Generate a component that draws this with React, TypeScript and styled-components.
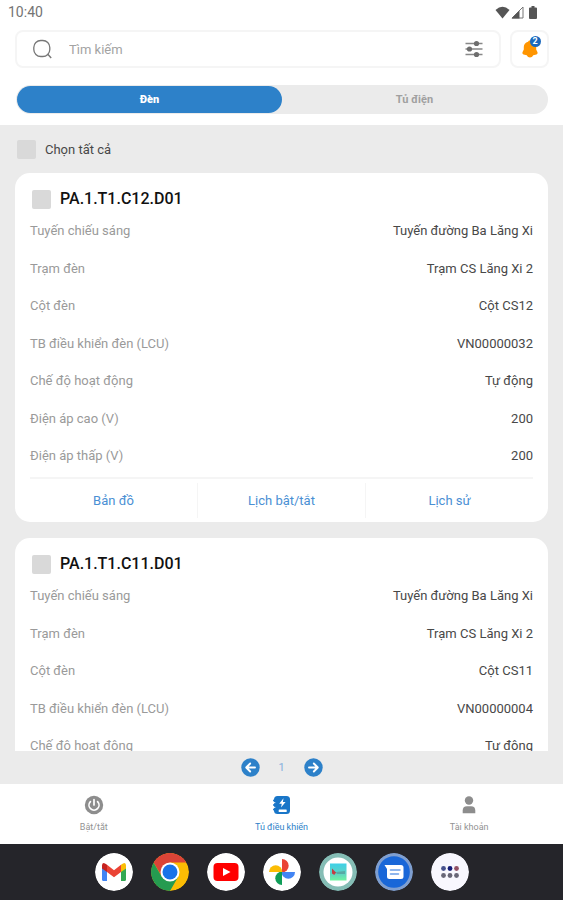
import React from "react";
import styled, { createGlobalStyle } from "styled-components";

const color = {
  blue: "#2d81c9",
  link: "#4a8fd4",
  page: "#ebebeb",
  line: "#f5f5f5",
  muted: "#9a9a9a",
  text: "#484848",
  dock: "#25252a",
};

const GlobalStyle = createGlobalStyle`
  * { box-sizing: border-box; }
  body { margin: 0; font-family: Roboto, "Noto Sans", sans-serif; background: ${color.page}; }
  button, input { font: inherit; }
  button { border: 0; padding: 0; background: none; cursor: pointer; }
`;

const Screen = styled.div`
  display: flex;
  flex-direction: column;
  height: 100vh;
  color: ${color.text};
`;

const Header = styled.header`
  flex: none;
  background: #fff;
  padding-bottom: 11px;
`;

const StatusBar = styled.div`
  display: flex;
  align-items: center;
  justify-content: space-between;
  height: 24px;
  padding: 0 24px 0 8px;
  font-size: 14px;
  color: #747474;
`;

const StatusIcons = styled.div`
  display: flex;
  align-items: center;
  gap: 1px;
`;

const SearchRow = styled.div`
  display: flex;
  gap: 9px;
  padding: 6px 14px 17px 15px;
`;

const SearchBox = styled.label`
  flex: 1;
  min-width: 0;
  display: flex;
  align-items: center;
  height: 38px;
  padding: 0 16px;
  border: 2px solid ${color.line};
  border-radius: 8px;
`;

const SearchInput = styled.input`
  flex: 1;
  min-width: 0;
  margin-left: 17px;
  padding: 0;
  border: 0;
  outline: 0;
  background: none;
  font-size: 13px;
  color: ${color.text};
  &::placeholder { color: #a3a3a3; opacity: 1; }
`;

const IconButton = styled.button`
  display: flex;
`;

const BellButton = styled.button`
  display: grid;
  place-items: center;
  width: 39px;
  height: 38px;
  border: 2px solid ${color.line};
  border-radius: 8px;
`;

const BellWrap = styled.span`
  position: relative;
  display: flex;
`;

const Badge = styled.span`
  position: absolute;
  top: -4px;
  right: -3px;
  width: 11px;
  height: 11px;
  border-radius: 50%;
  background: #1c69bd;
  color: #fff;
  font-size: 9px;
  font-weight: 700;
  line-height: 11px;
  text-align: center;
`;

const Tabs = styled.div`
  display: flex;
  height: 29px;
  margin: 0 15px 0 16px;
  padding: 1px;
  border-radius: 15px;
  background: ${color.page};
`;

const Tab = styled.button<{ $active?: boolean }>`
  flex: 1;
  border-radius: 14px;
  font-size: 11px;
  font-weight: ${(p) => (p.$active ? 900 : 700)};
  background: ${(p) => (p.$active ? color.blue : "transparent")};
  color: ${(p) => (p.$active ? "#fff" : "#a0a0a0")};
`;

const Main = styled.main`
  flex: 1;
  min-height: 0;
  display: flex;
  flex-direction: column;
  padding: 0 15px;
`;

const CheckLabel = styled.label`
  display: flex;
  align-items: center;
  gap: 9px;
`;

const SelectAll = styled(CheckLabel)`
  flex: none;
  height: 48px;
  padding-left: 2px;
  font-size: 13px;
`;

const Checkbox = styled.input`
  appearance: none;
  width: 19px;
  height: 19px;
  margin: 0;
  border-radius: 2px;
  background: #d9d9d9;
  &:checked { background: ${color.blue}; }
`;

const CardList = styled.div`
  flex: 1;
  min-height: 0;
  overflow: hidden;
  display: flex;
  flex-direction: column;
  gap: 16px;
`;

const Card = styled.article`
  flex: none;
  padding: 16px 15px 0;
  border-radius: 15px;
  background: #fff;
`;

const CardTitle = styled.h2`
  margin: 0 0 13px 2px;
  font-size: 16px;
  line-height: 20px;
  font-weight: 500;
  color: #111;
`;

const Fields = styled.dl`
  display: flex;
  flex-direction: column;
  justify-content: space-between;
  height: 243px;
  margin: 0 0 12px;
  font-size: 13px;
  line-height: 18px;
`;

const Field = styled.div`
  display: flex;
  justify-content: space-between;
`;

const FieldName = styled.dt`
  color: ${color.muted};
`;

const FieldValue = styled.dd`
  margin: 0;
`;

const Actions = styled.div`
  display: flex;
  height: 45px;
  border-top: 2px solid ${color.line};
`;

const Action = styled.button`
  flex: 1;
  margin: 4px 0;
  font-size: 13px;
  color: ${color.link};
  & + & { border-left: 1px solid ${color.line}; }
`;

const Pager = styled.nav`
  flex: none;
  display: flex;
  align-items: center;
  justify-content: center;
  gap: 17px;
  height: 33px;
  font-size: 11px;
  color: #86aede;
`;

const PageNumber = styled.span`
  width: 10px;
  text-align: center;
`;

const BottomNav = styled.nav`
  flex: none;
  display: flex;
  height: 60px;
  background: #fff;
`;

const NavItem = styled.a<{ $active?: boolean }>`
  flex: 1;
  display: flex;
  flex-direction: column;
  align-items: center;
  gap: 6px;
  padding-top: 11px;
  font-size: 9px;
  line-height: 12px;
  text-decoration: none;
  color: ${(p) => (p.$active ? color.blue : "#929292")};
`;

const Dock = styled.footer`
  flex: none;
  display: flex;
  align-items: center;
  justify-content: center;
  gap: 18px;
  height: 56px;
  background: ${color.dock};
`;

const DockApp = styled.button`
  display: flex;
  width: 38px;
  height: 38px;
  border-radius: 50%;
  overflow: hidden;
`;

const WifiIcon = () => (
  <svg width="15" height="13" viewBox="0 0 15 13" aria-hidden="true">
    <path d="M0.5 4 Q7.5 -2.5 14.5 4 L7.5 12.5Z" fill="#555" />
  </svg>
);

const SignalIcon = () => (
  <svg width="13" height="13" viewBox="0 0 13 13" aria-hidden="true">
    <path d="M1 12 12 1v11Z" fill="#fff" stroke="#777" />
    <path d="M0.5 12.5 8.5 4.5v8Z" fill="#555" />
  </svg>
);

const BatteryIcon = () => (
  <svg width="14" height="13" viewBox="0 0 14 13" aria-hidden="true">
    <path d="M5 1.5h1.5V0h3v1.5H11q1 0 1 1V12q0 1-1 1H5q-1 0-1-1V2.5q0-1 1-1Z" fill="#555" />
  </svg>
);

const SearchIcon = () => (
  <svg width="19" height="20" viewBox="0 0 19 20" fill="none" stroke="#777" aria-hidden="true">
    <rect x="0.8" y="1.5" width="16" height="16" rx="7" strokeWidth="1.3" />
    <path d="m14.6 15 3.6 4" strokeWidth="1.4" />
  </svg>
);

const FilterIcon = () => (
  <svg width="18" height="18" viewBox="0 0 18 18" aria-hidden="true">
    <path d="M0.5 3.5h17M0.5 9h17M0.5 14.5h17" stroke="#888" strokeWidth="1.5" />
    <g fill="#6e6e6e">
      <circle cx="11.5" cy="3.5" r="2.6" />
      <circle cx="4.5" cy="9" r="2.6" />
      <circle cx="11.5" cy="14.5" r="2.6" />
    </g>
  </svg>
);

const BellIcon = () => (
  <svg width="16" height="18" viewBox="0 0 16 18" aria-hidden="true">
    <path d="M8 .5c-1 0-1.600.5-1.900 1.200C3.300 2.400 1.800 4.300 1.800 7v2.400L.6 12c-.5 1.100-.1 2 .9 2.400l3.300.9C5.600 16.900 6.600 17.500 8 17.500s2.400-.6 3.200-2.200l3.300-.9c1-.4 1.400-1.300.9-2.400l-1.200-2.600V7c0-2.700-1.500-4.600-4.300-5.300C9.600 1 9 .5 8 .5Z" fill="#ff9500" />
  </svg>
);

const ArrowIcon = ({ forward }: { forward?: boolean }) => (
  <svg width="19" height="19" viewBox="0 0 19 19" aria-hidden="true">
    <circle cx="9.5" cy="9.5" r="9.2" fill={color.blue} />
    <path
      d={forward ? "M5 9.5h8.5M9.8 5.5l4 4-4 4" : "M14 9.5H5.5M9.2 5.5l-4 4 4 4"}
      fill="none"
      stroke="#fff"
      strokeWidth="1.9"
      strokeLinecap="round"
      strokeLinejoin="round"
    />
  </svg>
);

const PowerIcon = () => (
  <svg width="20" height="20" viewBox="0 0 20 20" aria-hidden="true">
    <circle cx="10" cy="10" r="9.2" fill="#8d8d8d" />
    <path d="M6.4 6.6a5 5 0 1 0 7.2 0M10 4.500V10" fill="none" stroke="#fff" strokeWidth="1.7" strokeLinecap="round" />
  </svg>
);

const CabinetIcon = () => (
  <svg width="20" height="20" viewBox="0 0 20 20" aria-hidden="true">
    <path d="M5.5 1h9Q18 1 18 4.5v11q0 3.500-3.500 3.500h-9Q2 19 2 15.500v-11Q2 1 5.500 1Z" fill="#1976c8" />
    <path d="M2 5.500h2M2 10h2M2 14.500h2" stroke="#1976c8" strokeWidth="2" strokeLinecap="round" />
    <path d="M1.500 7.700h1.800M1.500 12.300h1.800" stroke="#fff" strokeWidth="1" />
    <path d="M11.500 3.200 7.200 8.700h2.600l-.8 3.800 4.600-5.600h-2.700Z" fill="#fff" />
    <rect x="6.700" y="14.500" width="8" height="2.600" rx=".6" fill="#fff" />
  </svg>
);

const UserIcon = () => (
  <svg width="20" height="20" viewBox="0 0 20 20" fill="#8d8d8d" aria-hidden="true">
    <circle cx="10" cy="5.500" r="4.200" />
    <path d="M3.700 18.200V15.500q0-4.300 4.300-4.300h4q4.300 0 4.300 4.300v2.700Z" />
  </svg>
);

const GmailIcon = () => (
  <svg viewBox="0 0 38 38" aria-hidden="true">
    <circle cx="19" cy="19" r="19" fill="#fff" />
    <path d="M7 13v13.500q0 1.500 1.500 1.500H12V16Z" fill="#4285f4" />
    <path d="M26 16v12h3.500q1.500 0 1.500-1.500V13Z" fill="#34a853" />
    <path d="M26 11.800 28 10.400q3-1.400 3 2.200v2.800L26 19Z" fill="#fbbc04" />
    <path d="M7 15.400v-2.800q0-3.600 3-2.200l2 1.400V19Z" fill="#c5221f" />
    <path d="m12 11.800 7 5.400 7-5.400V19l-7 5.200L12 19Z" fill="#ea4335" />
  </svg>
);

const ChromeIcon = () => (
  <svg viewBox="0 0 38 38" aria-hidden="true">
    <circle cx="19" cy="19" r="19" fill="#fbbc04" />
    <path d="M2.500 9.500A19 19 0 0 1 35.500 9.500H19L11 23.600Z" fill="#db4437" />
    <path d="M2.500 9.500A19 19 0 0 0 19 38l8.200-14.300H10.800Z" fill="#259b50" />
    <circle cx="19" cy="19" r="9.500" fill="#fff" />
    <circle cx="19" cy="19" r="7.500" fill="#1a73e8" />
  </svg>
);

const YoutubeIcon = () => (
  <svg viewBox="0 0 38 38" aria-hidden="true">
    <circle cx="19" cy="19" r="19" fill="#fff" />
    <rect x="6.500" y="10" width="25" height="18" rx="4" fill="#f00" />
    <path d="m16 15 7.500 4-7.500 4Z" fill="#fff" />
  </svg>
);

const PhotosIcon = () => (
  <svg viewBox="0 0 38 38" aria-hidden="true">
    <circle cx="19" cy="19" r="19" fill="#fff" />
    <path d="M19 6a6.700 6.700 0 0 1 0 13.400Z" fill="#ea4335" />
    <path d="M32 19a6.700 6.700 0 0 1-13.400 0Z" fill="#4285f4" />
    <path d="M19 32a6.700 6.700 0 0 1 0-13.400Z" fill="#0f9d58" />
    <path d="M6 19a6.700 6.700 0 0 1 13.400 0Z" fill="#fbbc04" />
  </svg>
);

const PictureAppIcon = () => (
  <svg viewBox="0 0 38 38" aria-hidden="true">
    <defs>
      <linearGradient id="sky" x1="0" y1="0" x2="0" y2="1">
        <stop offset="0" stopColor="#3ed0e8" />
        <stop offset="0.6" stopColor="#5ed3c2" />
        <stop offset="1" stopColor="#70f5a0" />
      </linearGradient>
    </defs>
    <circle cx="19" cy="19" r="19" fill="#85bdb5" />
    <circle cx="19" cy="19" r="14.500" fill="#fff" />
    <rect x="11" y="10.500" width="16.500" height="17" fill="url(#sky)" />
    <path d="m13 15.500 4.500 4.500-1.500.4-.6 1.600-2.400-1.500Z" fill="#c53b42" />
    <path d="m17 19 9-1v3h-8Z" fill="#57aaa5" />
  </svg>
);

const MessagesIcon = () => (
  <svg viewBox="0 0 38 38" aria-hidden="true">
    <circle cx="19" cy="19" r="19" fill="#7f9fd0" />
    <circle cx="19" cy="19" r="15.800" fill="#1967d8" />
    <path d="M9.500 12H26q2.500 0 2.500 2.500v9Q28.500 26 26 26H14.500Q12 26 12 23.500V16Z" fill="#fff" />
    <path d="M15.500 17h9.500M15.500 21h8" stroke="#6b9ee8" strokeWidth="1.600" strokeLinecap="round" />
  </svg>
);

const AppsIcon = () => (
  <svg viewBox="0 0 38 38" aria-hidden="true">
    <circle cx="19" cy="19" r="19" fill="#f8f7fe" />
    <circle cx="12.500" cy="15.500" r="2.400" fill="#46518d" />
    <circle cx="19" cy="15.500" r="2.400" fill="#141c78" />
    <circle cx="25.500" cy="15.500" r="2.400" fill="#925064" />
    <g fill="#686677">
      <circle cx="12.500" cy="22.500" r="2.400" />
      <circle cx="19" cy="22.500" r="2.400" />
      <circle cx="25.500" cy="22.500" r="2.400" />
    </g>
  </svg>
);

const dockApps = [
  { name: "Gmail", Icon: GmailIcon },
  { name: "Chrome", Icon: ChromeIcon },
  { name: "YouTube", Icon: YoutubeIcon },
  { name: "Photos", Icon: PhotosIcon },
  { name: "Gallery", Icon: PictureAppIcon },
  { name: "Messages", Icon: MessagesIcon },
  { name: "Apps", Icon: AppsIcon },
];

const lamps = [
  { code: "PA.1.T1.C12.D01", pole: "Cột CS12", lcu: "VN00000032" },
  { code: "PA.1.T1.C11.D01", pole: "Cột CS11", lcu: "VN00000004" },
];

function LampCard({ code, pole, lcu }: { code: string; pole: string; lcu: string }) {
  const fields = [
    ["Tuyến chiếu sáng", "Tuyến đường Ba Lăng Xi"],
    ["Trạm đèn", "Trạm CS Lăng Xi 2"],
    ["Cột đèn", pole],
    ["TB điều khiển đèn (LCU)", lcu],
    ["Chế độ hoạt động", "Tự động"],
    ["Điện áp cao (V)", "200"],
    ["Điện áp thấp (V)", "200"],
  ];
  return (
    <Card>
      <CardTitle>
        <CheckLabel>
          <Checkbox type="checkbox" />
          {code}
        </CheckLabel>
      </CardTitle>
      <Fields>
        {fields.map(([name, value]) => (
          <Field key={name}>
            <FieldName>{name}</FieldName>
            <FieldValue>{value}</FieldValue>
          </Field>
        ))}
      </Fields>
      <Actions>
        <Action>Bản đồ</Action>
        <Action>Lịch bật/tắt</Action>
        <Action>Lịch sử</Action>
      </Actions>
    </Card>
  );
}

export default function App() {
  return (
    <Screen>
      <GlobalStyle />
      <Header>
        <StatusBar>
          <span>10:40</span>
          <StatusIcons>
            <WifiIcon />
            <SignalIcon />
            <BatteryIcon />
          </StatusIcons>
        </StatusBar>
        <SearchRow>
          <SearchBox>
            <SearchIcon />
            <SearchInput type="text" placeholder="Tìm kiếm" aria-label="Tìm kiếm" />
            <IconButton aria-label="Bộ lọc">
              <FilterIcon />
            </IconButton>
          </SearchBox>
          <BellButton aria-label="Thông báo">
            <BellWrap>
              <BellIcon />
              <Badge>2</Badge>
            </BellWrap>
          </BellButton>
        </SearchRow>
        <Tabs role="tablist">
          <Tab role="tab" aria-selected="true" $active>Đèn</Tab>
          <Tab role="tab" aria-selected="false">Tủ điện</Tab>
        </Tabs>
      </Header>
      <Main>
        <SelectAll>
          <Checkbox type="checkbox" />
          Chọn tất cả
        </SelectAll>
        <CardList>
          {lamps.map((lamp) => (
            <LampCard key={lamp.code} {...lamp} />
          ))}
        </CardList>
      </Main>
      <Pager aria-label="Phân trang">
        <IconButton aria-label="Trang trước"><ArrowIcon /></IconButton>
        <PageNumber>1</PageNumber>
        <IconButton aria-label="Trang sau"><ArrowIcon forward /></IconButton>
      </Pager>
      <BottomNav>
        <NavItem href="#power"><PowerIcon />Bật/tắt</NavItem>
        <NavItem href="#cabinet" $active aria-current="page"><CabinetIcon />Tủ điều khiển</NavItem>
        <NavItem href="#account"><UserIcon />Tài khoản</NavItem>
      </BottomNav>
      <Dock>
        {dockApps.map(({ name, Icon }) => (
          <DockApp key={name} aria-label={name}><Icon /></DockApp>
        ))}
      </Dock>
    </Screen>
  );
}
